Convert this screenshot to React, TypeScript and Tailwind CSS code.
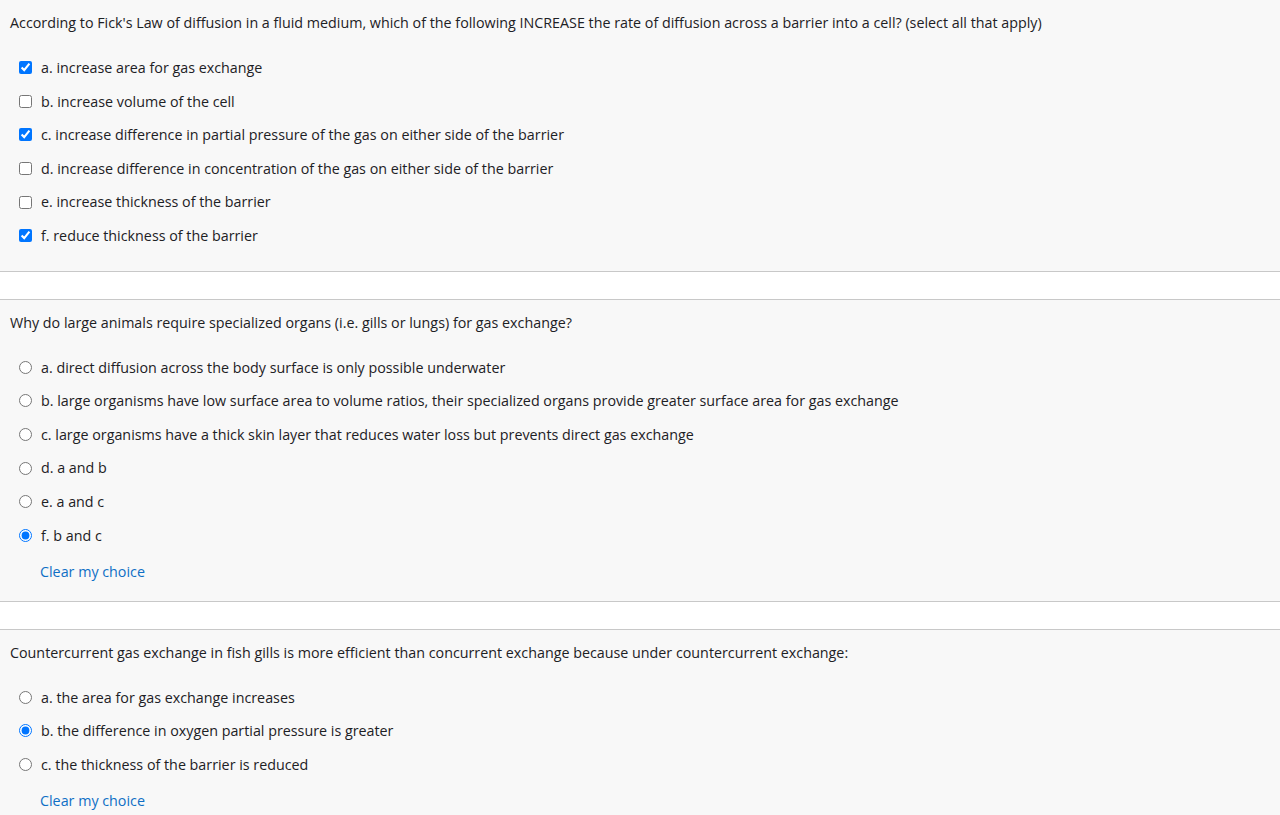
const questions = [
  {
    text: "According to Fick's Law of diffusion in a fluid medium, which of the following INCREASE the rate of diffusion across a barrier into a cell? (select all that apply)",
    type: "checkbox",
    options: [
      { label: "a. increase area for gas exchange", checked: true },
      { label: "b. increase volume of the cell", checked: false },
      { label: "c. increase difference in partial pressure of the gas on either side of the barrier", checked: true },
      { label: "d. increase difference in concentration of the gas on either side of the barrier", checked: false },
      { label: "e. increase thickness of the barrier", checked: false },
      { label: "f. reduce thickness of the barrier", checked: true },
    ],
  },
  {
    text: "Why do large animals require specialized organs (i.e. gills or lungs) for gas exchange?",
    type: "radio",
    options: [
      { label: "a. direct diffusion across the body surface is only possible underwater", checked: false },
      { label: "b. large organisms have low surface area to volume ratios, their specialized organs provide greater surface area for gas exchange", checked: false },
      { label: "c. large organisms have a thick skin layer that reduces water loss but prevents direct gas exchange", checked: false },
      { label: "d. a and b", checked: false },
      { label: "e. a and c", checked: false },
      { label: "f. b and c", checked: true },
    ],
  },
  {
    text: "Countercurrent gas exchange in fish gills is more efficient than concurrent exchange because under countercurrent exchange:",
    type: "radio",
    options: [
      { label: "a. the area for gas exchange increases", checked: false },
      { label: "b. the difference in oxygen partial pressure is greater", checked: true },
      { label: "c. the thickness of the barrier is reduced", checked: false },
    ],
  },
];

function Question({ q, idx }: { q: (typeof questions)[number]; idx: number }) {
  return (
    <div className="bg-[#f8f8f8] border-y border-[#c8c8c8] pt-[13px] pb-[18px]">
      <p className="px-[10px] leading-[20px]">{q.text}</p>
      <div className="mt-[18px] flex flex-col">
        {q.options.map((o) => (
          <label key={o.label} className="flex items-center h-[33.6px] pl-[19px]">
            <input
              type={q.type}
              name={"q" + idx}
              defaultChecked={o.checked}
              className="m-0 w-[13px] h-[13px] accent-[#0075ff]"
            />
            <span className="ml-[9px]">{o.label}</span>
          </label>
        ))}
      </div>
      {q.type === "radio" && (
        <a href="#" className="block ml-[40px] mt-[9px] text-[#0f6fc5]">
          Clear my choice
        </a>
      )}
    </div>
  );
}

export default function App() {
  return (
    <div
      className="bg-white min-h-screen text-[14.3px] text-[#1d2125] flex flex-col gap-[27px] -mt-px"
      style={{ fontFamily: '"Open Sans", "Noto Sans", sans-serif' }}
    >
      {questions.map((q, i) => (
        <Question key={i} q={q} idx={i} />
      ))}
    </div>
  );
}
